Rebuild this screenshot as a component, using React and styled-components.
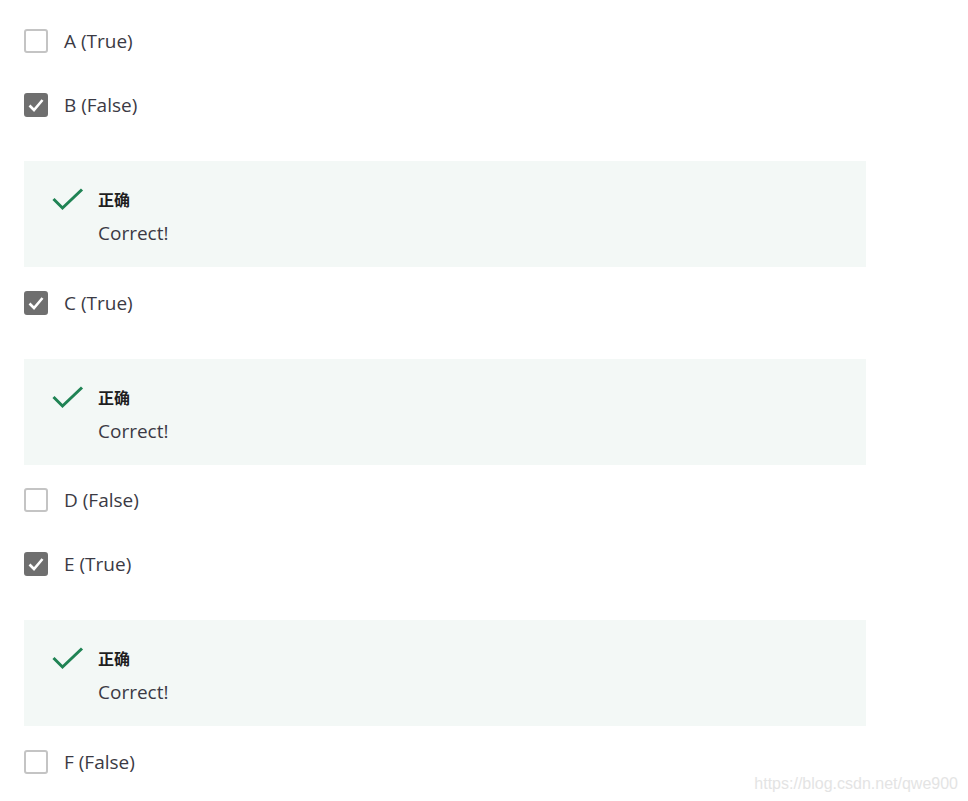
import React from "react";
import styled, { createGlobalStyle } from "styled-components";

const GlobalStyle = createGlobalStyle`
  html, body {
    margin: 0;
    padding: 0;
    background: #ffffff;
    font-family: "Open Sans", "Noto Sans", "Noto Sans CJK SC", sans-serif;
  }
`;

const Page = styled.div`
  position: relative;
  width: 968px;
  min-height: 801px;
  padding: 17px 0 0 24px;
  box-sizing: border-box;
`;

const List = styled.div`
  display: flex;
  flex-direction: column;
  width: 842px;
`;

const Item = styled.div`
  display: flex;
  flex-direction: column;
  padding-bottom: ${(props) => (props.$hasFeedback ? "11.5px" : "16px")};
`;

const Row = styled.label`
  display: flex;
  align-items: center;
  height: 48px;
  gap: 16px;
  cursor: pointer;
`;

const Box = styled.span`
  display: flex;
  align-items: center;
  justify-content: center;
  width: 24px;
  height: 24px;
  box-sizing: border-box;
  border-radius: 3px;
  border: 2px solid ${(props) => (props.$checked ? "#6f6f6f" : "#c4c4c4")};
  background: ${(props) => (props.$checked ? "#6f6f6f" : "#ffffff")};
`;

const OptionText = styled.span`
  font-size: 19px;
  color: #3b3a44;
`;

const Feedback = styled.div`
  display: flex;
  gap: 14px;
  margin-top: 32px;
  padding: 26px 24px 20px 28px;
  background: #f3f8f6;
`;

const FeedbackBody = styled.div`
  display: flex;
  flex-direction: column;
  gap: 8px;
`;

const FeedbackTitle = styled.span`
  font-family: "Noto Sans CJK SC", sans-serif;
  font-size: 16px;
  font-weight: 700;
  line-height: 24px;
  color: #1f1f1f;
`;

const FeedbackText = styled.span`
  font-size: 19px;
  line-height: 28px;
  color: #3b3a44;
`;

const Watermark = styled.span`
  position: absolute;
  right: 10px;
  bottom: 9px;
  font-family: "Liberation Sans", Arial, sans-serif;
  font-size: 16px;
  color: #e4e4e4;
`;

const options = [
  { label: "A (True)", checked: false },
  { label: "B (False)", checked: true, feedback: true },
  { label: "C (True)", checked: true, feedback: true },
  { label: "D (False)", checked: false },
  { label: "E (True)", checked: true, feedback: true },
  { label: "F (False)", checked: false },
];

const SmallCheck = () => (
  <svg width="16" height="14" viewBox="0 0 16 14">
    <path d="M1.5 7.5 L6 12 L14.5 2" fill="none" stroke="#fff" strokeWidth="2.6" />
  </svg>
);

const BigCheck = () => (
  <svg width="32" height="24" viewBox="0 0 32 24">
    <path d="M1.5 12 L10.5 21 L30 2.5" fill="none" stroke="#1f8354" strokeWidth="3" />
  </svg>
);

const App = () => {
  return (
    <Page>
      <GlobalStyle />
      <List>
        {options.map((opt) => (
          <Item key={opt.label} $hasFeedback={opt.feedback}>
            <Row>
              <Box $checked={opt.checked}>{opt.checked && <SmallCheck />}</Box>
              <OptionText>{opt.label}</OptionText>
            </Row>
            {opt.feedback && (
              <Feedback>
                <BigCheck />
                <FeedbackBody>
                  <FeedbackTitle>正确</FeedbackTitle>
                  <FeedbackText>Correct!</FeedbackText>
                </FeedbackBody>
              </Feedback>
            )}
          </Item>
        ))}
      </List>
      <Watermark>https://blog.csdn.net/qwe900</Watermark>
    </Page>
  );
};

export default App;
